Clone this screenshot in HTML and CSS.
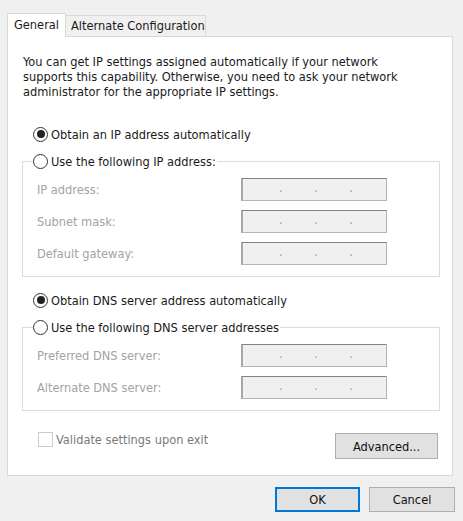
FILE: index.html
```html
<!DOCTYPE html>
<html>
<head>
<meta charset="utf-8">
<link rel="stylesheet" href="styles.css">
</head>
<body>
<div class="dialog">
  <div class="tabs">
    <div class="tab active">General</div>
    <div class="tab">Alternate Configuration</div>
  </div>
  <div class="panel">
    <p class="intro">You can get IP settings assigned automatically if your network supports this capability. Otherwise, you need to ask your network administrator for the appropriate IP settings.</p>

    <div class="radio-row first"><span class="radio checked"></span><span>Obtain an IP address automatically</span></div>
    <fieldset class="group">
      <legend class="radio-row"><span class="radio"></span><span>Use the following IP address:</span></legend>
      <div class="field"><span class="label">IP address:</span><span class="ipbox"><i>.</i><i>.</i><i>.</i></span></div>
      <div class="field"><span class="label">Subnet mask:</span><span class="ipbox"><i>.</i><i>.</i><i>.</i></span></div>
      <div class="field"><span class="label">Default gateway:</span><span class="ipbox"><i>.</i><i>.</i><i>.</i></span></div>
    </fieldset>

    <div class="radio-row second"><span class="radio checked"></span><span>Obtain DNS server address automatically</span></div>
    <fieldset class="group">
      <legend class="radio-row"><span class="radio"></span><span>Use the following DNS server addresses</span></legend>
      <div class="field"><span class="label">Preferred DNS server:</span><span class="ipbox"><i>.</i><i>.</i><i>.</i></span></div>
      <div class="field"><span class="label">Alternate DNS server:</span><span class="ipbox"><i>.</i><i>.</i><i>.</i></span></div>
    </fieldset>

    <div class="bottom-row">
      <div class="check-row"><span class="checkbox"></span><span>Validate settings upon exit</span></div>
      <div class="btn advanced">Advanced...</div>
    </div>
  </div>
  <div class="actions">
    <div class="btn ok">OK</div>
    <div class="btn cancel">Cancel</div>
  </div>
</div>
</body>
</html>
```

FILE: styles.css
```css
* { box-sizing: border-box; }
html, body { margin: 0; padding: 0; }
body {
  background: #f0f0f0;
  font-family: "DejaVu Sans Condensed", "DejaVu Sans", sans-serif;
  font-size: 12.7px;
  color: #1a1a1a;
  width: 463px;
  height: 521px;
  overflow: hidden;
}
.dialog { padding: 13px 0 0 7px; }

.tabs { display: flex; align-items: flex-end; height: 23px; }
.tab {
  height: 21px;
  padding: 0 0 0 5px;
  width: 140px;
  line-height: 20px;
  border: 1px solid #d9d9d9;
  border-left: none;
  border-bottom: none;
  background: #f0f0f0;
}
.tab.active {
  width: 59px;
  height: 24px;
  margin-bottom: -1px;
  padding-left: 6px;
  line-height: 21px;
  border-left: 1px solid #d9d9d9;
  background: #fff;
  position: relative;
  z-index: 1;
}

.panel {
  width: 446px;
  height: 440px;
  background: #fff;
  border: 1px solid #d9d9d9;
  padding: 0 14px 0 15px;
}
.intro {
  margin: 17px 0 0 0;
  line-height: 15px;
  width: 392px;
}

.radio-row {
  display: flex;
  align-items: center;
  gap: 3px;
  height: 20px;
  padding-left: 10px;
}
.radio-row.first { margin-top: 25px; }
.radio-row.second { margin-top: 13px; }
.radio {
  width: 15px;
  height: 15px;
  border: 1px solid #333;
  border-radius: 50%;
  background: #fff;
  display: flex;
  align-items: center;
  justify-content: center;
}
.radio.checked::after {
  content: "";
  width: 8px;
  height: 8px;
  border-radius: 50%;
  background: #222;
}

.group {
  margin: 7px 0 0 -1px;
  width: 418px;
  padding: 7px 0 11px 0;
  border: 1px solid #dcdcdc;
  display: flex;
  flex-direction: column;
  gap: 9px;
}
.group legend {
  margin-left: 10px;
  padding: 0 1px 0 0;
}
.field {
  display: grid;
  grid-template-columns: 204px 146px;
  align-items: center;
  height: 23px;
  padding-left: 14px;
}
.label { color: #a3a3a3; }
.ipbox {
  height: 23px;
  background: #f0f0f0;
  border: 1px solid #b4b4b4;
  border-top-color: #828282;
  border-left: 2px solid #a8a8a8;
  display: flex;
  gap: 31.5px;
  padding-left: 36px;
  line-height: 18px;
}
.ipbox i {
  font-style: normal;
  color: #9a9a9a;
}

.bottom-row {
  display: flex;
  align-items: flex-start;
  justify-content: space-between;
  margin-top: 20px;
}
.check-row {
  display: flex;
  align-items: center;
  gap: 3px;
  padding-left: 15px;
  height: 16px;
  color: #7a7a7a;
}
.checkbox {
  width: 15px;
  height: 15px;
  border: 1px solid #cccccc;
  background: #fff;
}
.btn {
  display: flex;
  align-items: center;
  justify-content: center;
  background: #e1e1e1;
  border: 1px solid #adadad;
  color: #111;
}
.advanced {
  width: 103px;
  height: 26px;
  margin-top: 2px;
}

.actions {
  display: flex;
  justify-content: flex-end;
  gap: 9px;
  margin-top: 11px;
  padding-right: 8px;
}
.ok {
  width: 85px;
  height: 25px;
  border: 2px solid #0078d7;
}
.cancel {
  width: 86px;
  height: 25px;
}
```
